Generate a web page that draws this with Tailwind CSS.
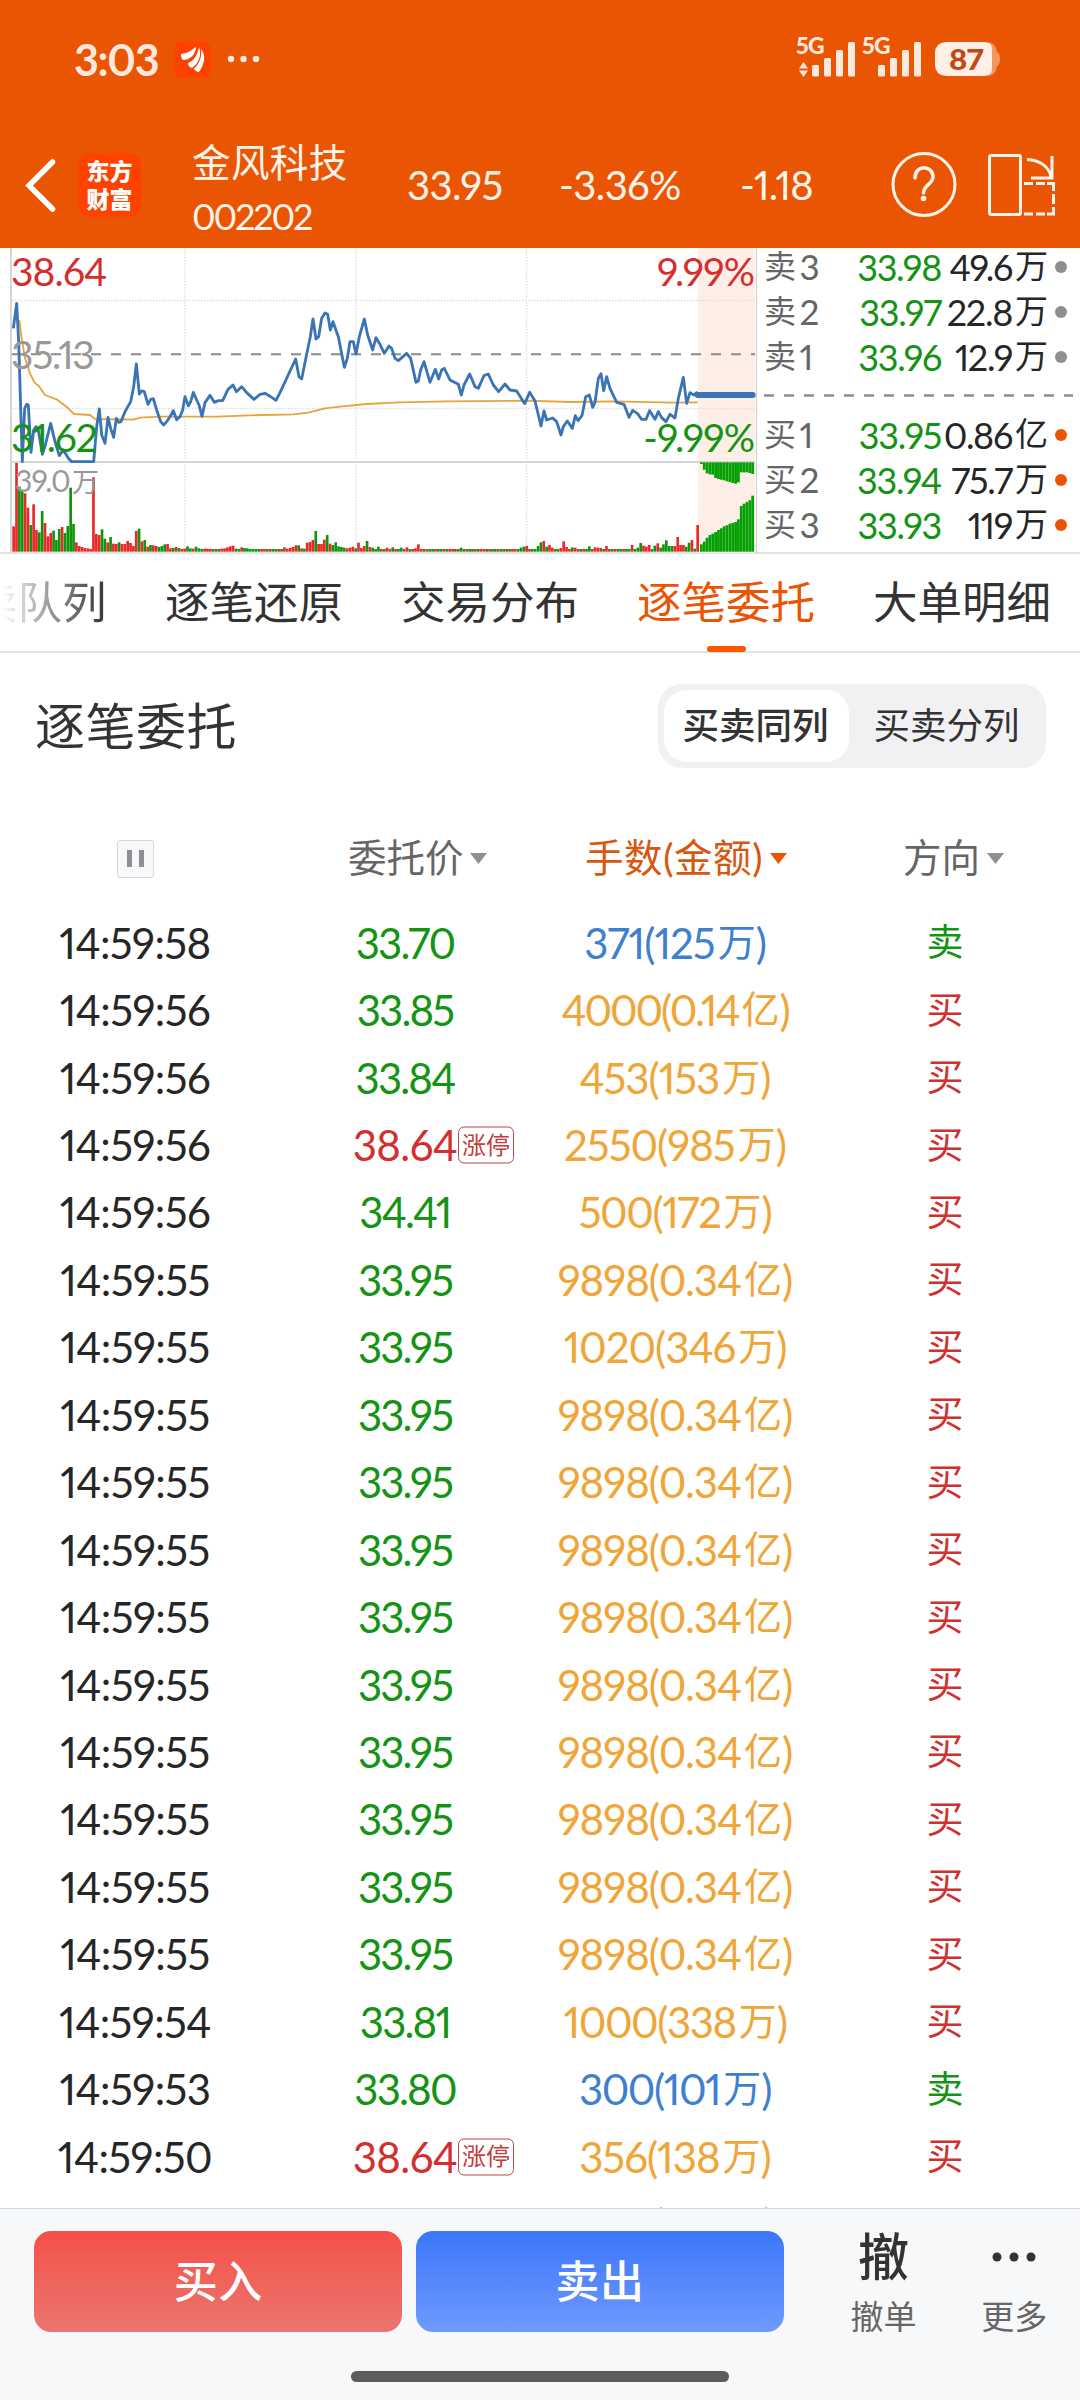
<!DOCTYPE html>
<html lang="zh-CN">
<head>
<meta charset="utf-8">
<title>金风科技 002202</title>
<script src="https://cdn.jsdelivr.net/npm/@tailwindcss/browser@4"></script>
</head>
<body class="bg-white">
<div class="relative flex h-[2400px] w-[1080px] flex-col overflow-hidden bg-white font-['Lato','Noto_Sans_CJK_SC',sans-serif] tracking-[-0.036em] text-[#262626] proportional-nums">

  <!-- status bar + stock header -->
  <header class="flex h-[248px] shrink-0 flex-col bg-[#ea5504] text-[#fff3ea]">
    <div class="flex h-[118px] items-center pl-[74px] text-[#ffe9dd]">
      <span class="w-[100px] text-[43px] font-bold leading-none tracking-[-0.03em]">3:03</span>
      <svg class="size-[37px]" viewBox="0 0 37 37"><rect width="37" height="37" rx="8" fill="#ff4200"/><path d="M7 13C14 12 18 9 22 6C22 13 16 19 9 19C7 17 7 15 7 13ZM14 22C20 20 24 13 25 6C28 14 25 22 18 27C15 26 14 24 14 22ZM20 28C26 22 28 15 27 8C32 14 31 22 25 31C23 31 21 29 20 28Z" fill="#fff"/></svg>
      <svg class="ml-[16px] h-[10px] w-[34px]" viewBox="0 0 34 10" fill="#ffe9dd"><circle cx="4" cy="5" r="3.2"/><circle cx="16.500" cy="5" r="3.200"/><circle cx="29" cy="5" r="3.200"/></svg>
      <svg class="ml-auto mr-[78px] h-[60px] w-[208px]" viewBox="794 29 208 60" fill="#ffe9dd">
        <g font-family="Lato" font-weight="900" font-size="23"><text x="796" y="54" textLength="28" lengthAdjust="spacingAndGlyphs">5G</text><text x="862" y="54" textLength="28" lengthAdjust="spacingAndGlyphs">5G</text></g>
        <path d="M799 68.500L803.500 62L808 68.500ZM799 70.500L803.500 77L808 70.500Z"/>
        <g><rect x="812" y="65" width="7" height="11.500" rx="1.500"/><rect x="824" y="58" width="7" height="18.500" rx="1.500"/><rect x="836" y="50" width="7" height="26.500" rx="1.500"/><rect x="848" y="42" width="7" height="34.500" rx="1.500"/>
        <rect x="878" y="65" width="7" height="11.500" rx="1.500"/><rect x="890" y="58" width="7" height="18.500" rx="1.500"/><rect x="902" y="50" width="7" height="26.500" rx="1.500"/><rect x="914" y="42" width="7" height="34.500" rx="1.500"/></g>
        <path d="M988 42C995 43 996 48 997 52Q1000 53 1000 59Q1000 65 997 66C996 71 995 75 988 76Z" fill="#f4945f"/>
        <path d="M946 42H984Q992 42 992 49V69Q992 76 984 76H946Q935 75 935 65V53Q935 43 946 42Z" fill="#ffefe6"/>
        <text x="949" y="69.500" font-family="Lato" font-weight="900" font-size="29" textLength="34" lengthAdjust="spacingAndGlyphs" fill="#c04a12">87</text>
      </svg>
    </div>
    <div class="flex h-[130px] items-center">
      <svg class="ml-[22px] mt-[3px] h-[56px] w-[36px]" viewBox="0 0 36 56" fill="none" stroke="#fff" stroke-width="5.500" stroke-linecap="round" stroke-linejoin="miter"><path d="M30.500 5L7 28.500L30.500 52"/></svg>
      <div class="ml-[20px] mt-[3px] flex h-[64px] w-[63px] flex-col items-center justify-center rounded-[12px] bg-[#ff4200] pb-[2px] font-['Noto_Sans_CJK_SC',sans-serif] text-[23px] font-black leading-[28px] tracking-normal text-white"><span>东方</span><span>财富</span></div>
      <div class="ml-[51px] mt-[11px] flex w-[215px] flex-col">
        <span class="text-[38.500px] leading-[54px] tracking-[0.01em]">金风科技</span>
        <span class="text-[36px] leading-[54px] tracking-[-0.06em]">002202</span>
      </div>
      <span class="w-[152px] pt-[4px] text-[40px]">33.95</span>
      <span class="w-[181px] pt-[4px] text-[40px]">-3.36%</span>
      <span class="w-[150px] pt-[4px] text-[40px] tracking-[-0.025em]">-1.18</span>
      <svg class="mt-[3px] h-[68px] w-[68px]" viewBox="0 0 68 68" fill="none" stroke="#fff3ea" stroke-width="3"><circle cx="34" cy="33.500" r="31"/><path d="M25 27C25 13 43 14 43 26C43 33 33.500 34 33.500 42" stroke-linecap="round" stroke-width="3.500"/><circle cx="33.500" cy="47.500" r="2.800" fill="#fff3ea" stroke="none"/></svg>
      <svg class="ml-[28px] mt-[3px] h-[68px] w-[72px]" viewBox="986 150 72 68" fill="none" stroke="#fff3ea" stroke-width="3"><rect x="989.500" y="154.500" width="31" height="59" rx="1.500"/><path d="M1027 158.500C1041 159 1050 167 1051 177M1052 155V177H1031"/><path d="M1024 182.500H1033M1036 182.500H1045M1047 182.500H1053.500V190M1053.500 193V203M1053.500 206V213H1047M1045 213H1036M1033 213H1024"/></svg>
    </div>
  </header>

  <!-- minute chart + order book -->
  <section class="flex h-[306px] shrink-0 border-b-2 border-[#e2e2e2]">
    <svg id="chart" class="h-[305px] w-[760px] shrink-0" viewBox="0 248 760 305">
      <rect x="698" y="248" width="57" height="305" fill="#fdeee7"/>
      <g stroke="#dedede" stroke-dasharray="1.500 1.500"><path d="M185 248V552M356 248V552M526.700 248V552M12 300.500H755M12 408.500H755" stroke-width="1.300"/></g>
      <path d="M11 248V553M11 462H755" stroke="#d6d6d6" stroke-width="2"/>
      <path d="M756.500 248V553" stroke="#cfcfcf" stroke-width="1.200"/>
      <path d="M12 354.300H755" stroke="#8a8a8a" stroke-width="2" stroke-dasharray="10 10" stroke-dashoffset="1"/>
      <g transform="translate(0 245) scale(.33333)" fill="none" stroke-linejoin="round">
        <g id="bars"></g>
        <polyline stroke="#e8a33c" stroke-width="5.500" points="58,225 65,280 75,340 90,385 103,412 118,425 135,450 170,463 205,490 222,507 270,510 285,522 400,524 420,518 480,515 650,515 750,511 880,508 925,503 975,490 1020,485 1100,477 1200,472 1340,469 1580,467 1710,471 1840,469 2020,473 2093,472"/>
        <polyline stroke="#3a74b5" stroke-width="8.500" points="40,250 50,175 56,290 67,650 74,490 80,478 85,480 93,622 101,555 108,545 114,550 127,628 136,600 152,535 165,590 178,632 190,615 205,640 215,650 281,650 290,545 298,492 305,570 315,595 324,517 332,550 341,577 349,520 356,532 363,530 375,500 392,470 401,425 409,357 418,447 425,438 433,440 444,478 452,463 460,461 470,495 482,530 491,540 500,530 510,515 520,497 530,524 540,515 548,495 555,455 565,482 572,470 580,442 590,465 597,480 606,514 615,473 630,451 643,472 655,467 668,467 684,433 699,420 709,440 725,425 740,443 762,463 780,448 795,445 812,455 828,466 840,443 887,342 897,395 905,402 920,328 931,275 939,222 948,282 956,275 965,220 975,204 983,208 991,255 999,230 1015,275 1033,367 1042,340 1050,290 1060,290 1068,327 1078,275 1093,222 1103,270 1118,315 1128,278 1140,298 1153,325 1167,303 1175,310 1185,340 1195,347 1220,325 1232,340 1248,412 1255,408 1262,375 1272,350 1290,412 1306,373 1316,402 1325,375 1333,370 1350,405 1375,418 1384,450 1392,420 1409,387 1425,425 1435,430 1452,392 1465,387 1480,420 1496,440 1515,417 1530,435 1550,438 1574,476 1589,442 1605,468 1623,543 1632,498 1640,525 1658,519 1670,530 1683,570 1690,545 1702,528 1717,550 1726,512 1734,527 1746,512 1757,455 1768,450 1778,487 1785,472 1795,400 1803,386 1811,437 1820,395 1830,430 1850,472 1872,478 1887,517 1898,496 1912,505 1925,523 1938,523 1949,497 1965,523 1975,500 1985,518 1998,530 2010,508 2025,519 2035,460 2050,397 2060,475 2070,443 2082,450 2090,443 2095,450"/>
        <path d="M2093 450H2258" stroke="#3a74b5" stroke-width="18" stroke-linecap="round"/>
      </g>
      <g font-family="Lato" font-size="39" letter-spacing="-0.9">
        <text x="11" y="285.500" fill="#d32f2f">38.64</text>
        <text x="11" y="368.500" fill="#999" letter-spacing="-1.300">35.13</text>
        <text x="11" y="452" fill="#149314" letter-spacing="-1.100">31.62</text>
        <text x="754" y="285.500" fill="#d32f2f" text-anchor="end">9.99%</text>
        <text x="754" y="452" fill="#149314" text-anchor="end">-9.99%</text>
        <text x="15" y="492" fill="#999" font-size="30" style="font-family:Lato,'Noto Sans CJK SC',sans-serif">39.0<tspan dx="2" font-size="27">万</tspan></text>
      </g>
    </svg>
    <div id="book" class="flex flex-1 flex-col pl-[4px] pr-[13px]"></div>
  </section>

  <!-- tabs -->
  <nav class="relative flex h-[99px] shrink-0 items-center whitespace-nowrap border-b-2 border-[#e2e2e2] text-[44.500px] tracking-normal text-[#333]">
    <span class="-ml-[27px] w-[192px] bg-linear-to-r from-white from-15% to-[#333] to-70% bg-clip-text text-transparent">卖队列</span>
    <span class="w-[236px]">逐笔还原</span>
    <span class="w-[236px]">交易分布</span>
    <span class="w-[236px] text-[#ea5504]">逐笔委托</span>
    <span>大单明细</span>
    <span class="absolute bottom-[-1px] left-[707px] h-[6px] w-[39px] rounded-full bg-[#fb5600]"></span>
  </nav>

  <!-- section title + toggle -->
  <div class="flex h-[146px] shrink-0 items-center justify-between pl-[35px] pr-[34px] text-[#333]">
    <h1 class="text-[50px] tracking-[0.01em]">逐笔委托</h1>
    <div class="flex h-[84px] w-[388px] items-center rounded-[24px] bg-[#f1f1f4] p-[6px] text-[36.500px] leading-none tracking-normal">
      <span class="flex h-[72px] w-[185px] items-center justify-center rounded-[23px] bg-white pb-[2px] pr-[2px] font-medium">买卖同列</span>
      <span class="flex h-[72px] flex-1 items-center justify-center pb-[2px] pl-[4px]">买卖分列</span>
    </div>
  </div>

  <!-- order list -->
  <main class="flex min-h-0 flex-1 flex-col overflow-hidden">
    <div class="grid h-[110px] shrink-0 grid-cols-[270px_270px_270px_270px] items-center pt-[9px] text-[38.500px] leading-none tracking-normal text-[#666]">
      <span class="flex justify-center"><span class="flex h-[38px] w-[37px] items-center justify-center gap-[7px] rounded-[3px] border border-[#d5d9de] bg-[#f6f8fa]"><i class="h-[17px] w-[5px] bg-[#8e8e93]"></i><i class="h-[17px] w-[5px] bg-[#8e8e93]"></i></span></span>
      <span class="flex items-center gap-[6px] pl-[78px]"><span class="pb-[3px]">委托价</span><svg class="h-[11px] w-[17px]" viewBox="0 0 17 11"><path d="M0 0H17L8.500 11Z" fill="#8e8e93"/></svg></span>
      <span class="flex items-center gap-[7px] pl-[45px] text-[#d9560f]"><span class="pb-[3px] tracking-[0.015em]">手数(金额)</span><svg class="h-[11px] w-[17px]" viewBox="0 0 17 11"><path d="M0 0H17L8.500 11Z" fill="#ea5504"/></svg></span>
      <span class="flex items-center gap-[7px] pl-[93px]"><span class="pb-[3px]">方向</span><svg class="h-[11px] w-[17px]" viewBox="0 0 17 11"><path d="M0 0H17L8.500 11Z" fill="#8e8e93"/></svg></span>
    </div>
    <div id="rows" class="flex flex-col"></div>
  </main>

  <!-- trade bar -->
  <footer class="flex h-[192px] shrink-0 flex-col border-t border-[#d3d7dc] bg-[#f7f8fa]">
    <div class="flex pl-[34px] pt-[22px]">
      <button class="mr-[14px] flex h-[101px] w-[369px] items-center justify-center rounded-[17px] bg-linear-to-b from-[#f44f48] to-[#ea756e] pb-[2px] text-[44px] font-medium tracking-[0.01em] text-white">买入</button>
      <button class="flex h-[101px] w-[368px] items-center justify-center rounded-[17px] bg-linear-to-b from-[#3b76f8] to-[#6f99ff] pb-[2px] text-[44px] font-medium tracking-[0.01em] text-white">卖出</button>
      <div class="ml-[35px] flex w-[130px] flex-col items-center text-[#333]">
        <span class="text-[51px] font-medium leading-[52px] tracking-normal">撤</span>
        <span class="mt-[8px] text-[33px] leading-[50px] tracking-normal text-[#666]">撤单</span>
      </div>
      <div class="flex w-[132px] flex-col items-center text-[#333]">
        <svg class="h-[52px] w-[44px]" viewBox="0 0 44 52" fill="#333"><circle cx="5" cy="26" r="4.500"/><circle cx="22" cy="26" r="4.500"/><circle cx="39" cy="26" r="4.500"/></svg>
        <span class="mt-[8px] text-[33px] leading-[50px] tracking-normal text-[#666]">更多</span>
      </div>
    </div>
    <div class="mx-auto mt-[30px] h-[11px] w-[378px] rounded-full bg-[#5b5d5b]"></div>
  </footer>
</div>

<script>
// Per-minute volume: positive = up (red), negative = down (green)
const head = [76,266,-195,-183,175,132,-80,142,65,-58,-122,86,46,56,-63,-35,-68,74,-56,-77,-192,-83,28,17,14,11,10,8,223,53,50,-67,-39,28,-44,24,23,-28,23,23,32,26,17,62,-69,31,-35,15,-20,19,17,-14,-17,-22,23,10,-11,14,-11,8,9,-16,-10,9,-15,-10,-8,9,9,8,-8,8,-8,9,10,13,16,18,-9,-8,13,-11,-10,-8,-8,-8];
const bumps = {95:13,96:9,97:11,98:14,99:19,100:-19,101:10,102:-9,103:27,104:29,105:35,106:-62,107:23,108:23,109:36,110:-50,111:24,112:-20,113:-28,114:-16,115:-14,116:-12,117:10,118:12,119:15,120:-10,121:27,122:11,123:17,124:-32,125:14,126:-12,128:-15,131:12,133:-13,136:-12,138:13,141:10,142:22,157:-12,178:-12,179:-15,180:17,184:-17,185:-28,186:32,187:-15,188:20,189:12,192:11,193:31,194:14,196:-13,197:12,202:-16,204:13,205:12,206:11,208:17,217:20,219:-12,220:-26,221:18,222:15,223:20,225:-18,226:25,227:-12,228:-22,229:-34,230:-17,231:-17,232:17,233:44,234:20,235:20,236:-15,237:-27,238:35,239:-9,240:80};
let bars = '';
for (let i = 0; i <= 240; i++) {
  const v = head[i] ?? bumps[i] ?? (i * 7 % 11 < 5 ? 8 : -8);
  const h = Math.abs(v);
  bars += `<rect x="${37 + i * 8.55}" y="${920 - h}" width="8" height="${h}" fill="${v > 0 ? '#eb2828' : '#0f950b'}"/>`;
}
const low = [22,30,42,50,54,59,65,70,76,79,84,86,89,97,137,144,149,154,168];
const high = [5,22,33,36,37,47,50,52,54,57,59,62,64,60,30,30,30,32,35];
low.forEach((h, i) => {
  const x = 2100 + i * 8.55;
  bars += `<rect x="${x}" y="${920 - h}" width="8.300" height="${h}" fill="#03a003"/><rect x="${x}" y="652" width="8.300" height="${high[i]}" fill="#03a003"/>`;
});
document.getElementById('bars').innerHTML = bars;

// Order book
const line = ([n, p, q, u], dot) => `<div class="flex h-[45px] items-center whitespace-nowrap leading-none">
  <span class="flex w-[70px] items-center text-[32px] text-[#666]"><span class="pb-[2px]">${n[0]}</span><span class="ml-[4px] text-[35px]">${n[1]}</span></span>
  <span class="w-[107px] text-right text-[36px] tracking-[-0.036em] text-[#149314]">${p}</span>
  <span class="flex w-[107px] items-center justify-end text-[36px] tracking-[-0.036em]">${q}<span class="ml-[3px] pb-[2px] text-[33px] tracking-normal">${u}</span></span>
  <i class="ml-auto mr-[6px] size-[12px] rounded-full ${dot}"></i></div>`;
const sell = [['卖3','33.98','49.6','万'],['卖2','33.97','22.8','万'],['卖1','33.96','12.9','万']];
const buy = [['买1','33.95','0.86','亿'],['买2','33.94','75.7','万'],['买3','33.93','119','万']];
document.getElementById('book').innerHTML =
  '<div class="-mt-[4px]">' + sell.map(r => line(r, 'bg-[#8e8e93]')).join('') + '</div>' +
  '<svg class="h-[33px] w-[309px]" viewBox="0 0 309 33"><path d="M0 16.500H309" stroke="#8e8e8e" stroke-width="2.500" stroke-dasharray="10 10"/></svg>' +
  '<div>' + buy.map(r => line(r, 'bg-[#ea5504]')).join('') + '</div>';

// Order rows: time, price, lots, amount, unit, side
const same = ['14:59:55','33.95','9898','0.34','亿','买'];
const data = [
  ['14:59:58','33.70','371','125','万','卖'],
  ['14:59:56','33.85','4000','0.14','亿','买'],
  ['14:59:56','33.84','453','153','万','买'],
  ['14:59:56','38.64','2550','985','万','买'],
  ['14:59:56','34.41','500','172','万','买'],
  same,
  ['14:59:55','33.95','1020','346','万','买'],
  same, same, same, same, same, same, same, same, same,
  ['14:59:54','33.81','1000','338','万','买'],
  ['14:59:53','33.80','300','101','万','卖'],
  ['14:59:50','38.64','356','138','万','买'],
  ['14:59:50','33.80','400','135','万','买']
];
document.getElementById('rows').innerHTML = data.map(([t, p, n, a, u, s], i) => {
  const limit = p === '38.64', isSell = s === '卖', peek = i === data.length - 1;
  const track = n === '4000' ? 'tracking-[-0.05em]' : n.includes('00') ? 'tracking-[-0.035em]' : 'tracking-[-0.024em]';
  return `<div class="grid h-[67.450px] grid-cols-[270px_270px_270px_270px] items-center whitespace-nowrap text-center text-[42px] leading-none">
    <span>${t}</span>
    <span class="relative ${limit ? 'text-[#d32f2f]' : 'tracking-[-0.044em] text-[#149314]'}">${p}${limit ? '<span class="absolute left-[188px] top-1/2 flex h-[37px] w-[56px] -translate-y-1/2 items-center justify-center rounded-[6px] border border-[#b9484a] pb-[2px] text-[24px] tracking-normal text-[#c43c3c]">涨停</span>' : ''}</span>
    <span class="flex items-center justify-center ${isSell ? 'text-[#3f7fd0]' : 'text-[#efa537]'} ${track}">${n}(${a}<span class="ml-[3px] ${peek ? 'pt-[4px]' : 'pb-[4px]'} text-[38px] tracking-normal">${u}</span>)</span>
    <span class="${peek ? 'pt-[8px]' : 'pb-[2px]'} text-[37px] tracking-normal ${isSell ? 'text-[#149314]' : 'text-[#cf3030]'}">${s}</span>
  </div>`;
}).join('');
</script>
</body>
</html>
